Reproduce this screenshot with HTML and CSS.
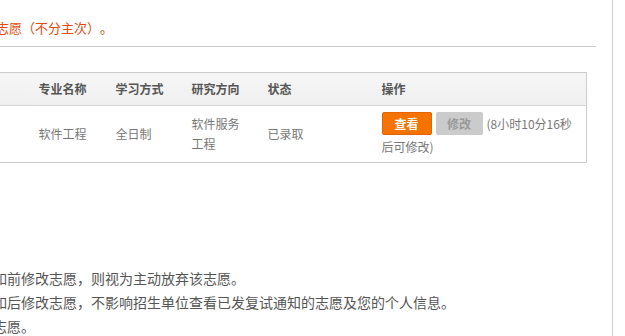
FILE: index.html
```html
<!DOCTYPE html>
<html lang="zh-CN">
<head>
    <meta charset="UTF-8">
    <title>我的志愿</title>
    <link rel="stylesheet" href="styles.css">
</head>
<body>
    <div class="page">
        <div class="main">
            <p class="notice">志愿<span class="kh" lang="zh-TW">（</span>不分主次<span class="kh" lang="zh-TW">）</span>。</p>
            <div class="line"></div>

            <table class="zy-table">
                <thead>
                    <tr>
                        <th class="c-dw"></th>
                        <th class="c-zy">专业名称</th>
                        <th class="c-fs">学习方式</th>
                        <th class="c-fx">研究方向</th>
                        <th class="c-zt">状态</th>
                        <th class="c-cz">操作</th>
                    </tr>
                </thead>
                <tbody>
                    <tr>
                        <td></td>
                        <td>软件工程</td>
                        <td>全日制</td>
                        <td>软件服务工程</td>
                        <td>已录取</td>
                        <td class="cz"><a class="btn btn-ck" href="#">查看</a><span class="btn btn-xg">修改</span><span class="wait">(8小时10分16秒后可修改)</span></td>
                    </tr>
                </tbody>
            </table>

            <ul class="tips">
                <li>如前修改志愿，则视为主动放弃该志愿。</li>
                <li>如后修改志愿，不影响招生单位查看已发复试通知的志愿及您的个人信息。</li>
                <li>志愿。</li>
            </ul>
        </div>
    </div>
</body>
</html>
```

FILE: styles.css
```css
html, body {
    margin: 0;
    padding: 0;
    background: #fff;
}
body {
    font-family: "Noto Sans CJK SC", "Liberation Sans", sans-serif;
    font-size: 12px;
    color: #666;
}
.page {
    width: 625px;
    height: 336px;
    overflow: hidden;
}
.main {
    width: 613px;
    height: 336px;
    border-right: 1px solid #ccc;
    overflow: hidden;
    padding-right: 16px;
    box-sizing: border-box;
}
.notice {
    margin: 18px 0 0 -4px;
    font-size: 13px;
    line-height: 20px;
    color: #e14b0a;
    text-spacing-trim: space-all;
}
.notice .kh {
    font-family: "Noto Sans CJK TC", sans-serif;
}
.line {
    height: 1px;
    background: #ccc;
    margin-top: 8px;
}
.zy-table {
    margin: 25px 0 0 -1px;
    width: 588px;
    border-collapse: collapse;
    table-layout: fixed;
    border: 1px solid #ccc;
}
.zy-table th, .zy-table td {
    box-sizing: border-box;
    text-align: left;
    padding: 0 16px 0 10px;
    line-height: 20px;
}
.zy-table th {
    height: 33px;
    background: linear-gradient(#f6f6f6, #efefef);
    border-bottom: 1px solid #d6d6d6;
    color: #555;
    font-weight: bold;
}
.zy-table td {
    height: 57px;
    color: #777;
}
.zy-table .c-dw { width: 29px; padding: 0; }
.zy-table .c-zy { width: 77px; }
.zy-table .c-fs { width: 76px; }
.zy-table .c-fx { width: 76px; }
.zy-table .c-zt { width: 114px; }
.zy-table td.cz {
    padding-right: 4px;
}
.btn {
    display: inline-block;
    height: 23px;
    line-height: 23px;
    text-align: center;
    font-weight: bold;
    font-size: 12px;
    border-radius: 2px;
    text-decoration: none;
    vertical-align: middle;
    box-sizing: border-box;
    margin-right: 4px;
}
.btn-ck {
    width: 50px;
    background: #f57300;
    border: 1px solid #e36400;
    color: #fff;
    line-height: 21px;
}
.btn-xg {
    width: 47px;
    background: #cbcbcb;
    color: #999;
}
.wait {
    color: #777;
    vertical-align: middle;
}
.tips {
    list-style: none;
    margin: 103px 0 0 -7px;
    padding: 0;
    font-size: 14px;
    line-height: 24px;
    color: #555;
    white-space: nowrap;
}
```
